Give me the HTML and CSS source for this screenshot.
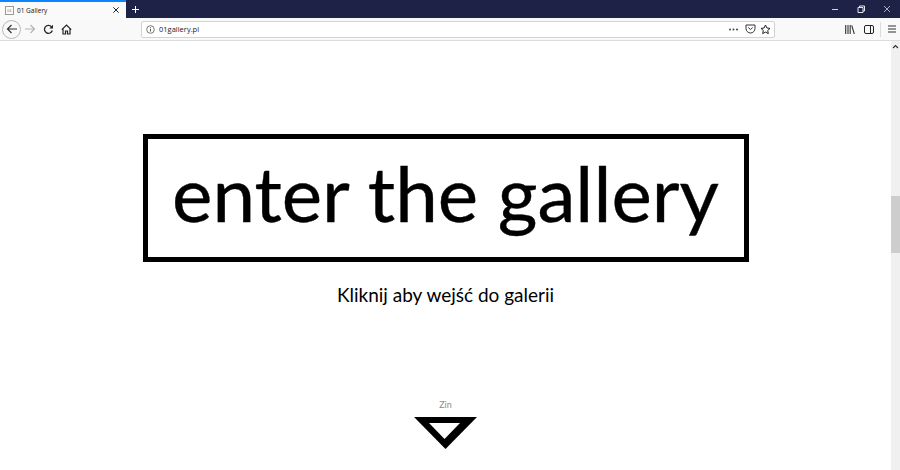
FILE: index.html
```html
<!DOCTYPE html>
<html lang="pl">
<head>
<meta charset="utf-8">
<title>01 Gallery</title>
<link rel="stylesheet" href="styles.css">
</head>
<body>
<div class="window">
  <div class="tabbar">
    <div class="tab">
      <span class="favicon">01</span>
      <span class="tab-title">01 Gallery</span>
      <svg class="tab-close" width="6" height="6" viewBox="0 0 6 6"><path d="M.3.300l5.400 5.400M5.700.300L.3 5.700" stroke="#222" fill="none"/></svg>
    </div>
    <svg class="newtab" width="7" height="7" viewBox="0 0 7 7"><path d="M3.500 0v7M0 3.500h7" stroke="#fff" fill="none"/></svg>
    <div class="winbtns">
      <svg width="8" height="8" viewBox="0 0 8 8"><path d="M1 4.500h6" stroke="#cfd2de" fill="none"/></svg>
      <svg width="8" height="8" viewBox="0 0 8 8"><path d="M1 2.500h5v5H1zM2.500 2.500V1h5v5H6" stroke="#e4e6ee" fill="none"/></svg>
      <svg width="8" height="8" viewBox="0 0 8 8"><path d="M1 1l6 6M7 1L1 7" stroke="#a9adc0" fill="none"/></svg>
    </div>
  </div>
  <div class="toolbar">
    <div class="backbtn">
      <svg width="12" height="12" viewBox="0 0 12 12"><path d="M11 6H1.500M5.500 2l-4 4 4 4" stroke="#333" stroke-width="1.200" fill="none"/></svg>
    </div>
    <svg class="tool forward" width="12" height="12" viewBox="0 0 12 12"><path d="M1 6h9.500M6.500 2l4 4-4 4" stroke="#b4b4b4" stroke-width="1.200" fill="none"/></svg>
    <svg class="tool reload" width="11" height="11" viewBox="0 0 11 11"><path d="M9.300 6.500A4 4 0 1 1 8.500 2.700" stroke="#222" stroke-width="1.300" fill="none"/><path d="M10 .8v3.700H6.300z" fill="#222"/></svg>
    <svg class="tool home" width="11" height="11" viewBox="0 0 11 11"><path d="M.8 5.700L5.500 1l4.700 4.700M2 4.800V10h2.500V7h2v3H9V4.800" stroke="#222" stroke-width="1.200" fill="none"/></svg>
    <div class="urlbar">
      <svg class="info" width="9" height="9" viewBox="0 0 9 9"><circle cx="4.500" cy="4.500" r="3.800" stroke="#555" stroke-width=".8" fill="none"/><path d="M4.500 4v2.500M4.500 2.300v1" stroke="#555" fill="none"/></svg>
      <span class="url">01gallery.pl</span>
      <svg class="url-dots" width="9" height="3" viewBox="0 0 9 3"><circle cx="1" cy="1.500" r="1" fill="#444"/><circle cx="4.500" cy="1.500" r="1" fill="#444"/><circle cx="8" cy="1.500" r="1" fill="#444"/></svg>
      <svg class="pocket" width="11" height="10" viewBox="0 0 11 10"><path d="M1 1h9v3.500a4.500 4.500 0 0 1-9 0z" stroke="#333" fill="none"/><path d="M3.300 3.500l2.200 2 2.200-2" stroke="#333" fill="none"/></svg>
      <svg class="star" width="11" height="11" viewBox="0 0 11 11"><path d="M5.500 1l1.400 3 3.100.4-2.300 2.100.6 3.100-2.800-1.500-2.800 1.500.6-3.100L1 4.400 4.100 4z" stroke="#222" fill="none"/></svg>
    </div>
    <svg class="tool library" width="10" height="9" viewBox="0 0 10 9"><path d="M.7 0v9M3 0v9M5.200 0v9M6.700.3l2.600 8.700" stroke="#333" stroke-width="1.100" fill="none"/></svg>
    <svg class="tool sidebar" width="10" height="9" viewBox="0 0 10 9"><rect x=".5" y=".5" width="9" height="8" rx="1.500" stroke="#222" fill="none"/><path d="M6.500 1v7" stroke="#222" fill="none"/></svg>
    <span class="divider"></span>
    <svg class="tool menu" width="8" height="8" viewBox="0 0 8 8"><path d="M0 1h8M0 4h8M0 7h8" stroke="#333" stroke-width="1.100" fill="none"/></svg>
  </div>
  <div class="viewport">
    <main class="page">
      <h1 class="enter">enter the gallery</h1>
      <p class="sub">Kliknij aby wejść do galerii</p>
      <div class="zin">Zin</div>
      <svg class="arrow" width="63" height="32" viewBox="0 0 63 32"><path d="M0 0h63L31.500 32z" fill="#000"/><path d="M15 6h31L30.500 22z" fill="#fff"/></svg>
    </main>
    <div class="scrollbar">
      <svg class="scroll-up" width="7" height="5" viewBox="0 0 7 5"><path d="M1 4l2.500-2.500L6 4" stroke="#333" stroke-width="1.200" fill="none"/></svg>
      <div class="thumb"></div>
    </div>
  </div>
</div>
</body>
</html>
```
FILE: styles.css
```css
* { box-sizing: border-box; }
html, body { margin: 0; padding: 0; height: 100%; overflow: hidden; background: #fff; }
body { font-family: "Liberation Sans", sans-serif; }
.window { width: 900px; height: 470px; display: flex; flex-direction: column; }
.tabbar { height: 18px; background: #1e2247; display: flex; align-items: center; flex: none; }
.tab { width: 126px; height: 18px; background: #fafafa; border-top: 2px solid #0a84ff; display: flex; align-items: center; padding-left: 5px; padding-right: 7px; }
.favicon { width: 9px; height: 9px; border: 1px solid #999; font-size: 4px; line-height: 7px; text-align: center; color: #777; flex: none; }
.tab-title { font-family: "Open Sans", sans-serif; font-size: 6.5px; color: #111; margin-left: 3px; flex: 1; }
.tab-close { flex: none; }
.newtab { margin-left: 6px; }
.winbtns { margin-left: auto; display: flex; gap: 18px; padding-right: 9px; }
.toolbar { height: 23px; background: #f9f9fa; border-bottom: 1px solid #dcdcde; display: flex; align-items: center; flex: none; padding-left: 2px; }
.backbtn { width: 19px; height: 19px; border: 1px solid #b8b8b8; border-radius: 50%; display: flex; align-items: center; justify-content: center; flex: none; }
.tool { flex: none; }
.forward { margin-left: 3px; }
.reload { margin-left: 7px; }
.home { margin-left: 7px; }
.urlbar { margin-left: 69px; width: 634px; height: 17px; background: #fff; border: 1px solid #d3d3d6; border-radius: 2px; display: flex; align-items: center; padding-left: 4px; padding-right: 3px; flex: none; }
.url { font-family: "Open Sans", sans-serif; font-size: 7.5px; color: #222; margin-left: 4px; flex: 1; }
.url-dots { flex: none; }
.pocket { margin-left: 7px; }
.star { margin-left: 4px; }
.library { margin-left: 70px; }
.sidebar { margin-left: 9px; }
.divider { width: 1px; height: 15px; background: #dcdcde; margin-left: 6px; flex: none; }
.menu { margin-left: 7px; }
.viewport { flex: 1; display: flex; min-height: 0; }
.page { flex: 1; display: flex; flex-direction: column; align-items: center; padding-top: 93px; }
.enter { margin: 0; width: 606px; height: 128px; border: 5px solid #000; font-family: Lato, sans-serif; font-weight: 400; font-size: 76.4px; line-height: 108px; -webkit-text-stroke: .4px #000; text-align: center; color: #000; white-space: nowrap; }
.sub { margin: 21px 0 0; font-family: Lato, sans-serif; font-size: 19px; line-height: 24px; color: #000; }
.zin { margin-top: 92px; font-family: Lato, sans-serif; font-size: 9px; line-height: 11px; color: #8f8f78; }
.arrow { margin-top: 7px; flex: none; }
.scrollbar { width: 9px; background: #f0f0f0; display: flex; flex-direction: column; align-items: center; flex: none; padding-top: 3px; }
.scroll-up { flex: none; }
.thumb { width: 9px; height: 57px; margin-top: 147px; background: #cdcdcd; flex: none; }
```
